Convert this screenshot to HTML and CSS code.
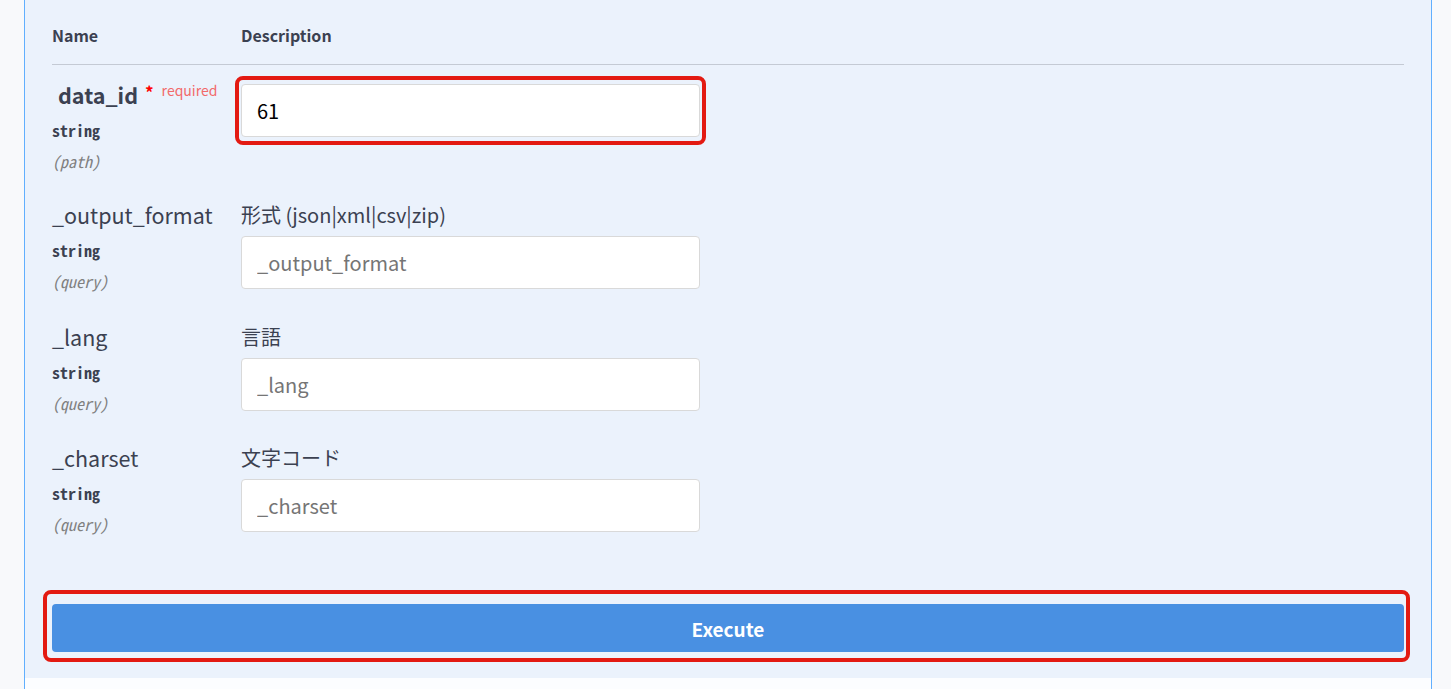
FILE: index.html
```html
<!DOCTYPE html>
<html lang="ja">
<head>
<meta charset="utf-8">
<title>Parameters</title>
<link rel="stylesheet" href="styles.css">
</head>
<body>
<div class="page">
  <div class="block">
    <div class="params">
      <div class="head-row">
        <div class="col-name">Name</div>
        <div class="col-desc">Description</div>
      </div>

      <div class="param-row first">
        <div class="col-name">
          <div class="pname required">data_id<span class="star">*</span><span class="req">required</span></div>
          <div class="ptype">string</div>
          <div class="pin">(path)</div>
        </div>
        <div class="col-desc">
          <div class="highlight-wrap">
            <input class="pinput filled" type="text" value="61">
            <span class="mark mark-input"></span>
          </div>
        </div>
      </div>

      <div class="param-row">
        <div class="col-name">
          <div class="pname">_output_format</div>
          <div class="ptype">string</div>
          <div class="pin">(query)</div>
        </div>
        <div class="col-desc">
          <div class="pdesc">形式 (json|xml|csv|zip)</div>
          <input class="pinput" type="text" placeholder="_output_format">
        </div>
      </div>

      <div class="param-row">
        <div class="col-name">
          <div class="pname">_lang</div>
          <div class="ptype">string</div>
          <div class="pin">(query)</div>
        </div>
        <div class="col-desc">
          <div class="pdesc">言語</div>
          <input class="pinput" type="text" placeholder="_lang">
        </div>
      </div>

      <div class="param-row last">
        <div class="col-name">
          <div class="pname">_charset</div>
          <div class="ptype">string</div>
          <div class="pin">(query)</div>
        </div>
        <div class="col-desc">
          <div class="pdesc">文字コード</div>
          <input class="pinput" type="text" placeholder="_charset">
        </div>
      </div>
    </div>

    <div class="execute-wrapper">
      <div class="execute-box">
        <button class="execute" type="button">Execute</button>
        <span class="mark mark-exec"></span>
      </div>
    </div>
    <div class="block-foot"></div>
  </div>
</div>
</body>
</html>
```

FILE: styles.css
```css
* { box-sizing: border-box; }

html, body {
  margin: 0;
  padding: 0;
  height: 100%;
}

body {
  background: #f8f9fb;
  font-family: "Noto Sans CJK JP", "Noto Sans", sans-serif;
  color: #3b4151;
  overflow: hidden;
}

.page {
  padding: 0 19px 0 24px;
  height: 100%;
}

.block {
  border-left: 1px solid #61affe;
  border-right: 1px solid #61affe;
  background: #ebf2fc;
  min-height: 100%;
  display: flex;
  flex-direction: column;
}

.params {
  padding: 0 27px;
}

.head-row {
  display: flex;
  padding: 25px 0 19px;
  border-bottom: 1px solid #c4cad4;
  font-size: 16px;
  font-weight: 700;
  line-height: 20px;
}

.col-name {
  width: 189px;
  flex: none;
}

.col-desc {
  flex: 1;
}

.param-row {
  display: flex;
  padding: 18px 0 16px;
}

.param-row.first {
  padding-top: 18px;
  padding-bottom: 14px;
}

.param-row.last {
  padding-top: 17px;
}

.pname {
  font-size: 21.5px;
  line-height: 24px;
  height: 24px;
  white-space: nowrap;
}

.pname.required {
  font-weight: 700;
  padding-left: 6px;
}

.star {
  color: #f00;
  font-size: 17px;
  position: relative;
  top: -5px;
  margin-left: 7px;
}

.req {
  color: #f26a6a;
  font-size: 14px;
  font-weight: 400;
  position: relative;
  top: -8px;
  margin-left: 8px;
}

.ptype {
  font-family: "Noto Sans Mono CJK JP", "DejaVu Sans Mono", monospace;
  font-size: 16px;
  font-weight: 700;
  line-height: 20px;
  margin-top: 13px;
  color: #3b4151;
}

.pin {
  font-family: "Noto Sans Mono CJK JP", "DejaVu Sans Mono", monospace;
  font-size: 16px;
  font-style: italic;
  line-height: 20px;
  margin-top: 11px;
  color: #808080;
}

.pdesc {
  font-size: 20px;
  line-height: 24px;
  height: 24px;
  white-space: nowrap;
}

.pinput {
  display: block;
  width: 459px;
  height: 53px;
  margin-top: 9px;
  padding: 0 15px;
  background: #fff;
  border: 1px solid #d9d9d9;
  border-radius: 4px;
  font-family: "Noto Sans CJK JP", "Noto Sans", sans-serif;
  font-size: 20px;
  color: #000;
  outline: none;
}

.pinput::placeholder {
  color: #757575;
}

.highlight-wrap {
  position: relative;
  width: 459px;
  margin-top: 1px;
}

.highlight-wrap .pinput {
  margin-top: 0;
  height: 53px;
}

.mark {
  position: absolute;
  border: 4px solid #e31a12;
  border-radius: 8px;
  pointer-events: none;
}

.mark-input {
  top: -8px;
  left: -6px;
  right: -6px;
  bottom: -8px;
}

.execute-wrapper {
  padding: 54px 27px 26px;
}

.execute-box {
  position: relative;
}

.execute {
  display: block;
  width: 100%;
  height: 48px;
  border: none;
  border-radius: 4px;
  background: #4990e2;
  color: #fff;
  font-family: "Noto Sans CJK JP", "Noto Sans", sans-serif;
  font-size: 19px;
  font-weight: 700;
  cursor: pointer;
}

.mark-exec {
  top: -14px;
  left: -9px;
  right: -6px;
  bottom: -10px;
}

.block-foot {
  flex: 1;
  background: #fcfdff;
  min-height: 11px;
}
```
